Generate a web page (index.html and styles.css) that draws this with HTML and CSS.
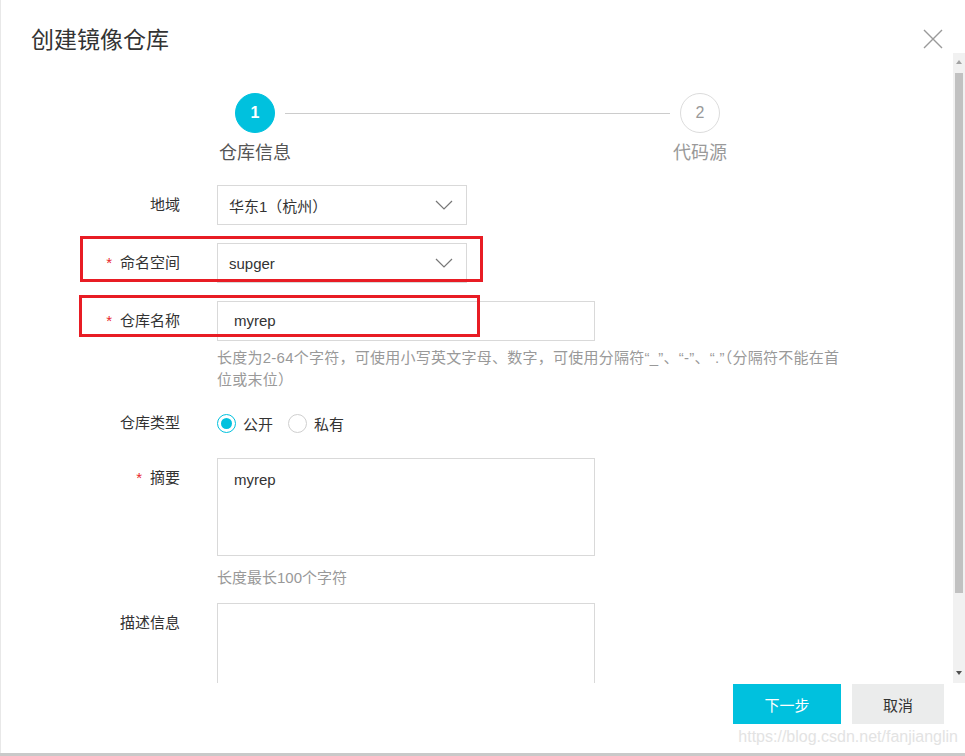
FILE: index.html
```html
<!DOCTYPE html>
<html lang="zh-CN">
<head>
<meta charset="utf-8">
<title>创建镜像仓库</title>
<link rel="stylesheet" href="styles.css">
</head>
<body>
<div class="dialog">
  <header class="header">
    <h1 class="title">创建镜像仓库</h1>
    <button class="close" aria-label="关闭">
      <svg width="20" height="20" viewBox="0 0 20 20"><path d="M1 1 L19 19 M19 1 L1 19" stroke="#9a9a9a" stroke-width="1.4" fill="none"/></svg>
    </button>
  </header>
  <div class="body">
    <div class="content">
      <div class="steps">
        <div class="step">
          <div class="step-circle step-circle--active">1</div>
          <div class="step-label step-label--active">仓库信息</div>
        </div>
        <div class="step-line"></div>
        <div class="step">
          <div class="step-circle">2</div>
          <div class="step-label">代码源</div>
        </div>
      </div>

      <div class="form">
        <div class="row">
          <div class="label">地域</div>
          <div class="control">
            <div class="select">
              <span>华东1（杭州）</span>
              <svg class="chev" width="18" height="10" viewBox="0 0 18 10"><path d="M1 1 L9 9 L17 1" stroke="#777" stroke-width="1.2" fill="none"/></svg>
            </div>
          </div>
        </div>

        <div class="row">
          <div class="label"><span class="star">*</span>命名空间</div>
          <div class="control">
            <div class="select">
              <span>supger</span>
              <svg class="chev" width="18" height="10" viewBox="0 0 18 10"><path d="M1 1 L9 9 L17 1" stroke="#777" stroke-width="1.2" fill="none"/></svg>
            </div>
          </div>
          <div class="mark mark--one"></div>
        </div>

        <div class="row row--hinted">
          <div class="label"><span class="star">*</span>仓库名称</div>
          <div class="control">
            <div class="input">myrep</div>
            <div class="hint hint--wide">长度为2-64个字符，可使用小写英文字母、数字，可使用分隔符“_”、“-”、“.”（分隔符不能在首位或末位）</div>
          </div>
          <div class="mark mark--two"></div>
        </div>

        <div class="row row--radio">
          <div class="label">仓库类型</div>
          <div class="control radios">
            <label class="radio"><span class="radio-dot radio-dot--on"></span>公开</label>
            <label class="radio"><span class="radio-dot"></span>私有</label>
          </div>
        </div>

        <div class="row row--summary">
          <div class="label"><span class="star">*</span>摘要</div>
          <div class="control">
            <div class="textarea">myrep</div>
            <div class="hint hint--short">长度最长100个字符</div>
          </div>
        </div>

        <div class="row">
          <div class="label">描述信息</div>
          <div class="control">
            <div class="textarea textarea--tall"></div>
          </div>
        </div>
      </div>
    </div>
    <div class="scrollbar">
      <div class="sb-arrow sb-arrow--up"></div>
      <div class="sb-track"><div class="sb-thumb"></div></div>
      <div class="sb-arrow sb-arrow--down"></div>
    </div>
  </div>
  <footer class="footer">
    <button class="btn btn--primary">下一步</button>
    <button class="btn btn--default">取消</button>
    <div class="watermark">https://blog.csdn.net/fanjianglin</div>
  </footer>
  <div class="bottom-strip"></div>
</div>
</body>
</html>
```

FILE: styles.css
```css
* { box-sizing: border-box; }
html, body {
  margin: 0;
  padding: 0;
  background: #fff;
}
body {
  font-family: "Liberation Sans", "Noto Sans CJK SC", sans-serif;
  color: #333;
  width: 965px;
  height: 756px;
  overflow: hidden;
}
.dialog {
  width: 965px;
  height: 756px;
  display: flex;
  flex-direction: column;
  box-shadow: inset 1px 0 0 #e8e8e8;
  position: relative;
}
.header {
  height: 53px;
  flex: none;
  display: flex;
  align-items: flex-start;
  justify-content: space-between;
  padding: 28px 22px 0 31px;
}
.title {
  margin: 0;
  font-size: 23px;
  line-height: 24px;
  font-weight: normal;
  color: #333;
}
.close {
  border: 0;
  background: none;
  padding: 0;
  margin-top: 1px;
  width: 20px;
  height: 20px;
}
.body {
  height: 630px;
  flex: none;
  display: flex;
  overflow: hidden;
}
.content {
  flex: 1;
  overflow: hidden;
}
.steps {
  display: flex;
  margin: 40px 0 0 235px;
  width: 485px;
}
.step {
  width: 40px;
  display: flex;
  flex-direction: column;
  align-items: center;
  flex: none;
}
.step-circle {
  width: 40px;
  height: 40px;
  border-radius: 50%;
  border: 1px solid #dcdcdc;
  color: #999;
  font-size: 16px;
  display: flex;
  align-items: center;
  justify-content: center;
}
.step-circle--active {
  background: #00c1de;
  border-color: #00c1de;
  color: #fff;
  font-weight: bold;
}
.step-label {
  margin-top: 8px;
  font-size: 18px;
  line-height: 24px;
  white-space: nowrap;
  color: #999;
}
.step-label--active { color: #555; }
.step-line {
  flex: 1;
  height: 1px;
  background: #cccccc;
  margin: 20px 10px 0;
}
.form {
  margin-top: 20px;
  display: flex;
  flex-direction: column;
}
.row {
  display: grid;
  grid-template-columns: 180px 378px;
  column-gap: 37px;
  margin-bottom: 18px;
  position: relative;
}
.row--hinted { margin-bottom: 12px; }
.row--radio { margin-bottom: 15px; }
.row--summary { margin-bottom: 14px; }
.label {
  text-align: right;
  font-size: 15px;
  line-height: 40px;
  color: #333;
  white-space: nowrap;
}
.star {
  color: #e8262d;
  margin-right: 8px;
}
.control { min-width: 0; }
.select {
  width: 250px;
  height: 40px;
  border: 1px solid #d9d9d9;
  display: flex;
  align-items: center;
  justify-content: space-between;
  padding: 0 13px 0 11px;
  font-size: 15px;
  color: #333;
}
.chev { flex: none; }
.input {
  width: 378px;
  height: 40px;
  border: 1px solid #d9d9d9;
  padding: 0 16px;
  font-size: 15px;
  line-height: 38px;
  color: #333;
}
.hint {
  font-size: 15px;
  line-height: 22px;
  color: #999;
}
.hint--wide {
  width: 626px;
  margin-top: 6px;
  letter-spacing: 0.25px;
}
.hint--short { margin-top: 11px; }
.radios {
  display: flex;
  align-items: center;
  height: 40px;
}
.radio {
  display: flex;
  align-items: center;
  font-size: 15px;
  color: #333;
  margin-right: 15px;
}
.radio-dot {
  width: 19px;
  height: 19px;
  border-radius: 50%;
  border: 1px solid #cfcfcf;
  margin-right: 7px;
  display: flex;
  align-items: center;
  justify-content: center;
}
.radio-dot--on { border-color: #00c1de; }
.radio-dot--on::after {
  content: "";
  width: 11px;
  height: 11px;
  border-radius: 50%;
  background: #00c1de;
}
.textarea {
  width: 378px;
  height: 98px;
  border: 1px solid #d9d9d9;
  padding: 10px 16px;
  font-size: 15px;
  line-height: 22px;
  color: #333;
}
.textarea--tall { height: 120px; }
.mark {
  position: absolute;
  border: 3px solid #e81c24;
  pointer-events: none;
}
.mark--one {
  left: 80px;
  top: -7px;
  width: 403px;
  height: 46px;
}
.mark--two {
  left: 79px;
  top: -6px;
  width: 401px;
  height: 42px;
}
.scrollbar {
  width: 12px;
  flex: none;
  background: #f1f1f1;
  display: flex;
  flex-direction: column;
  align-items: center;
}
.sb-arrow {
  height: 17px;
  flex: none;
  width: 12px;
  position: relative;
}
.sb-arrow::after {
  content: "";
  position: absolute;
  left: 3px;
  border-left: 3.5px solid transparent;
  border-right: 3.5px solid transparent;
}
.sb-arrow--up::after {
  top: 7px;
  border-bottom: 4px solid #a3a3a3;
}
.sb-arrow--down::after {
  top: 5px;
  border-top: 4px solid #505050;
}
.sb-track {
  flex: 1;
  width: 12px;
  padding: 3px 2px 0 2px;
}
.sb-thumb {
  width: 8px;
  height: 520px;
  margin-left: 0;
  background: #c1c1c1;
}
.footer {
  height: 70px;
  flex: none;
  display: flex;
  justify-content: flex-end;
  align-items: flex-start;
  gap: 11px;
  padding: 1px 21px 0 0;
  position: relative;
}
.btn {
  height: 40px;
  border: 0;
  font-family: inherit;
  font-size: 15px;
  padding: 0;
}
.btn--primary {
  width: 108px;
  background: #00c1de;
  color: #fff;
}
.btn--default {
  width: 92px;
  background: #ebecec;
  color: #333;
}
.watermark {
  position: absolute;
  right: 7px;
  top: 45px;
  font-size: 16px;
  line-height: 18px;
  color: #e3e3e3;
  white-space: nowrap;
}
.bottom-strip {
  height: 3px;
  flex: none;
  background: #c9c9c9;
}
```
